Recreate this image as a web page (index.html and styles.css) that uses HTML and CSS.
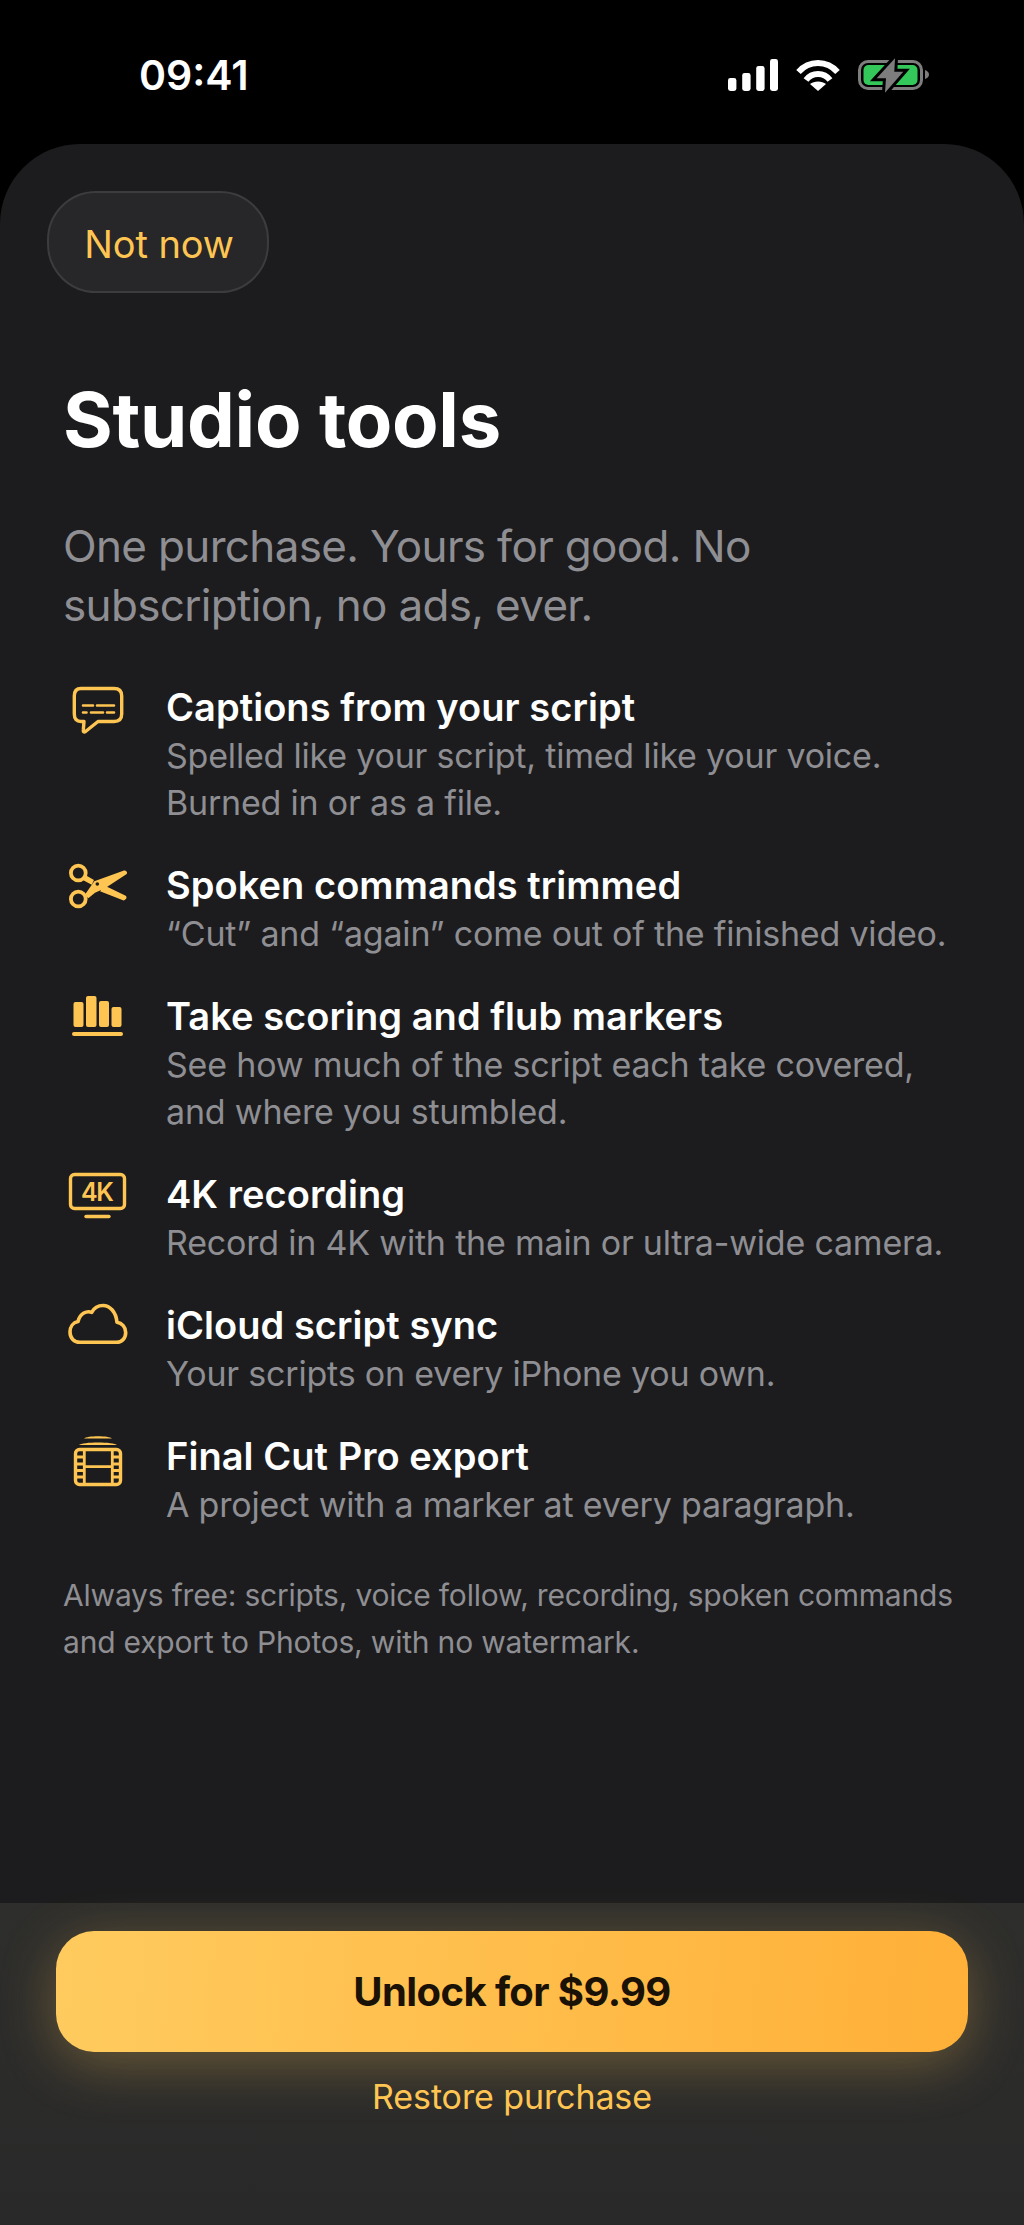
FILE: index.html
```html
<!DOCTYPE html>
<html>
<head>
  <title>Studio tools</title>
  <link rel="stylesheet" href="styles.css">
</head>
<body>

  <div class="status-bar">
    <div class="time">09:41</div>
    <div class="status-icons">
      <svg width="50" height="34" viewBox="0 0 50 34" fill="#fff">
        <rect x="0" y="20" width="8.4" height="13" rx="2.4"/>
        <rect x="14.2" y="15" width="8.4" height="18" rx="2.4"/>
        <rect x="28.2" y="8" width="8.4" height="25" rx="2.4"/>
        <rect x="42" y="1" width="8" height="32" rx="2.4"/>
      </svg>
      <svg width="44" height="34" viewBox="0 0 44 34" fill="none" stroke="#fff" stroke-width="6">
        <path d="M2.5 14 C13 2 31 2 41.5 14"/>
        <path d="M10 22 C16 14 28 14 34 22"/>
        <path d="M22 33 L14 26 C18 22.5 26 22.5 30 26 Z" fill="#fff" stroke="none"/>
      </svg>
      <svg width="71" height="36" viewBox="0 0 71 36" fill="none">
        <rect x="1.5" y="3.5" width="62" height="27" rx="8.5" stroke="#7d7d7d" stroke-width="3"/>
        <rect x="5.5" y="7" width="54" height="20" rx="5" fill="#34c759"/>
        <path d="M67 12 C69.5 13 71 14.5 71 16.5 C71 18.5 69.5 20 67 21 Z" fill="#7d7d7d"/>
        <path d="M37 0.3 L18.7 20.3 H28 L27 34.7 L45.3 13.7 H36.3 Z" fill="#7d7d7d" stroke="#000" stroke-width="6" paint-order="stroke"/>
      </svg>
    </div>
  </div>

  <div class="sheet">
    <div class="content">
      <button class="not-now">Not now</button>
      <h1>Studio tools</h1>
      <p class="lead">One purchase. Yours for good. No subscription, no ads, ever.</p>

      <div class="features">
        <div class="feature">
          <svg class="icon" viewBox="0 0 68 60" fill="none" stroke="#ffc552" stroke-linecap="round" stroke-linejoin="round">
            <path d="M17 6.5 H50 C55.5 6.5 57.7 9 57.7 14 V32 C57.7 37 55.5 39.5 50 39.5 H34 L21.5 49.5 C20 50.5 19 50 19.3 48 L20 39.5 H17 C12.5 39.5 10.3 37 10.3 32 V14 C10.3 9 12.5 6.5 17 6.5 Z" stroke-width="3.4"/>
            <path d="M19 23.5 H29 M33 23.5 H50 M19 30.5 H22.5 M27 30.5 H39 M43 30.5 H50" stroke-width="2.6"/>
          </svg>
          <div class="feature-text">
            <div class="feature-title">Captions from your script</div>
            <div class="feature-desc">Spelled like your script, timed like your voice.<br>Burned in or as a file.</div>
          </div>
        </div>

        <div class="feature">
          <svg class="icon" viewBox="0 0 68 60" fill="none" stroke="#ffc552">
            <circle cx="14.3" cy="13" r="7.4" stroke-width="3.8"/>
            <circle cx="14.3" cy="39" r="7.4" stroke-width="3.8"/>
            <path d="M21 34.5 L30.3 21.3 L59.3 10.7 C61.5 10 64 12 62.7 14 L41 28.3 L31 32.7 L24.3 38.3 Z M21.7 15.3 L30 20 L27.7 24.7 L19.3 20.2 Z M41 25.7 L61.7 35.8 C64 37.5 61 41 59 40.3 L36 31.2 Z" fill="#ffc552" stroke="none"/>
            <circle cx="33.3" cy="24" r="1.8" fill="#1c1c1e" stroke="none"/>
          </svg>
          <div class="feature-text">
            <div class="feature-title">Spoken commands trimmed</div>
            <div class="feature-desc">“Cut” and “again” come out of the finished video.</div>
          </div>
        </div>

        <div class="feature">
          <svg class="icon" viewBox="0 0 68 60" fill="#ffc552">
            <rect x="9.5" y="11" width="10" height="25" rx="2"/>
            <rect x="22" y="5" width="10.5" height="31" rx="2"/>
            <rect x="35" y="10" width="10" height="26" rx="2"/>
            <rect x="47.5" y="16" width="10" height="20" rx="2"/>
            <rect x="8" y="41" width="51" height="4" rx="2"/>
          </svg>
          <div class="feature-text">
            <div class="feature-title">Take scoring and flub markers</div>
            <div class="feature-desc">See how much of the script each take covered,<br>and where you stumbled.</div>
          </div>
        </div>

        <div class="feature">
          <svg class="icon" viewBox="0 0 68 60" fill="none" stroke="#ffc552">
            <rect x="6.5" y="5.5" width="54" height="34" rx="4" stroke-width="3.4"/>
            <path d="M22 47.5 H45" stroke-width="3.4" stroke-linecap="round"/>
            <text class="icon-4k" x="32.7" y="32" text-anchor="middle" stroke="none">4K</text>
          </svg>
          <div class="feature-text">
            <div class="feature-title">4K recording</div>
            <div class="feature-desc">Record in 4K with the main or ultra-wide camera.</div>
          </div>
        </div>

        <div class="feature">
          <svg class="icon" viewBox="0 0 68 60" fill="none" stroke="#ffc552" stroke-width="3.6" stroke-linejoin="round">
            <path d="M16 42.3 H52.7 C58 42.3 61.7 38 61.7 32.5 C61.7 27 58 23 53 22.3 C52 12 46 5.5 39 5.5 C34 5.5 30 8 27.7 12.3 C23 10.5 16 13 14 21.5 C9 22.5 6 27 6 32 C6 38 10 42.3 16 42.3 Z"/>
          </svg>
          <div class="feature-text">
            <div class="feature-title">iCloud script sync</div>
            <div class="feature-desc">Your scripts on every iPhone you own.</div>
          </div>
        </div>

        <div class="feature">
          <svg class="icon" viewBox="0 0 68 60" fill="none" stroke="#ffc552">
            <path d="M20 7.5 C23 4.5 45 4.5 48 7.5 Z M15 14 C18 10.5 50 10.5 53 14 Z" fill="#ffc552" stroke="none"/>
            <rect x="11.5" y="18.5" width="45" height="35" rx="4" stroke-width="3.4"/>
            <path d="M20.3 18.5 V53.5 M48.3 18.5 V53.5 M20.3 35.7 H48.3 M11.5 26 H20.3 M11.5 33 H20.3 M11.5 39.5 H20.3 M11.5 46 H20.3 M48.3 26 H56.5 M48.3 33 H56.5 M48.3 39.5 H56.5 M48.3 46 H56.5" stroke-width="2.8"/>
          </svg>
          <div class="feature-text">
            <div class="feature-title">Final Cut Pro export</div>
            <div class="feature-desc">A project with a marker at every paragraph.</div>
          </div>
        </div>
      </div>

      <p class="free-note">Always free: scripts, voice follow, recording, spoken commands and export to Photos, with no watermark.</p>
    </div>

    <div class="footer">
      <button class="unlock">Unlock for $9.99</button>
      <div class="restore">Restore purchase</div>
    </div>
  </div>

</body>
</html>
```

FILE: styles.css
```css
* {
  box-sizing: border-box;
}
html, body {
  margin: 0;
  height: 2225px;
  overflow: hidden;
}
body {
  display: flex;
  flex-direction: column;
  background: #000;
  color: #fff;
  font-family: Inter, "Liberation Sans", sans-serif;
}
.status-bar {
  height: 144px;
  flex-shrink: 0;
  display: flex;
  justify-content: space-between;
  padding: 52px 95px 0 139px;
}
.time {
  font-size: 41px;
  line-height: 46px;
  font-weight: 600;
}
.status-icons {
  display: flex;
  align-items: flex-start;
  gap: 18px;
  padding-top: 6px;
}
.sheet {
  flex: 1;
  display: flex;
  flex-direction: column;
  background: #1c1c1e;
  border-radius: 80px 80px 0 0;
  overflow: hidden;
}
.content {
  flex: 1;
  padding: 47px 63px 0;
}
.not-now {
  display: block;
  width: 222px;
  height: 102px;
  margin-left: -16px;
  border: 2px solid #3c3c3e;
  border-radius: 49px;
  background: #272729;
  color: #ffc552;
  font: 400 38px Inter, sans-serif;
  letter-spacing: -0.1px;
  padding: 3px 0 0 2px;
}
h1 {
  margin: 80px 0 0;
  font-size: 76px;
  line-height: 92px;
  font-weight: 700;
  letter-spacing: -0.3px;
}
.lead {
  margin: 52px 0 0;
  font-size: 44px;
  line-height: 59px;
  letter-spacing: -0.66px;
  color: #8e8e93;
}
.features {
  margin-top: 47px;
  display: flex;
  flex-direction: column;
  gap: 34px;
}
.feature {
  display: flex;
  gap: 34px;
}
.icon {
  width: 68px;
  height: 60px;
  flex-shrink: 0;
  margin-left: 1px;
}
.icon-4k {
  font-family: Inter, sans-serif;
  font-size: 25px;
  font-weight: 600;
  letter-spacing: -1.5px;
  fill: #ffc552;
}
.feature-title {
  font-size: 38px;
  line-height: 50px;
  font-weight: 600;
  letter-spacing: 0.05px;
}
.feature-desc {
  font-size: 34px;
  line-height: 47px;
  letter-spacing: -0.2px;
  color: #8e8e93;
}
.free-note {
  margin: 44px 0 0;
  font-size: 30px;
  line-height: 47px;
  letter-spacing: -0.2px;
  color: #8e8e93;
}
.footer {
  height: 322px;
  flex-shrink: 0;
  padding-top: 28px;
  background: linear-gradient(#2e2e2c, #292929);
  text-align: center;
}
.unlock {
  display: block;
  width: 912px;
  height: 121px;
  margin: 0 auto;
  border: 0;
  border-radius: 38px;
  background: linear-gradient(95deg, #ffcb5e, #ffb038);
  box-shadow: 0 12px 56px rgba(255, 197, 82, 0.3);
  color: #1a1206;
  font: 700 40px Inter, sans-serif;
  letter-spacing: -0.6px;
}
.restore {
  margin-top: 22px;
  font-size: 34px;
  line-height: 46px;
  letter-spacing: -0.1px;
  color: #ffc552;
}
```
